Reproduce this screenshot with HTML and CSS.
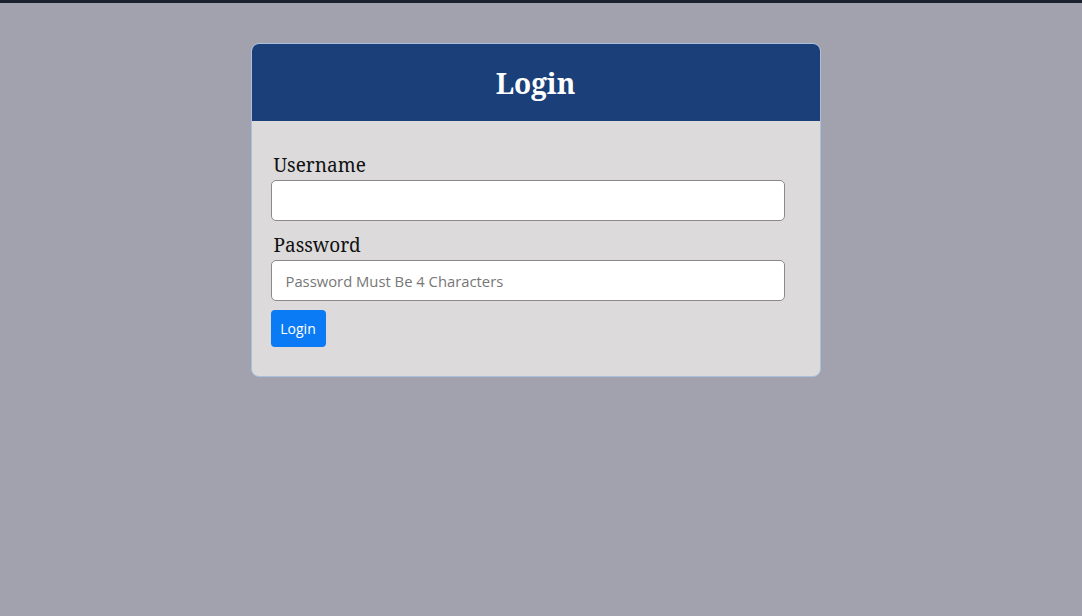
FILE: index.html
```html
<!DOCTYPE html>
<html>
<head>
<meta charset="utf-8">
<link rel="stylesheet" href="styles.css">
</head>
<body>
<div class="topbar"></div>
<main class="page">
  <section class="card">
    <header class="card-head"><h1>Login</h1></header>
    <form class="card-body">
      <label class="lbl" for="u">Username</label>
      <input class="field" id="u" type="text">
      <label class="lbl" for="p">Password</label>
      <input class="field" id="p" type="password" placeholder="Password Must Be 4 Characters">
      <button class="btn" type="button">Login</button>
    </form>
  </section>
</main>
</body>
</html>
```
FILE: styles.css
```css
html, body { margin: 0; padding: 0; }
body {
  background: #a2a2ae;
  height: 616px;
  overflow: hidden;
  font-family: "Noto Serif", "DejaVu Serif", serif;
}
.topbar { height: 3px; background: #1c222d; }
.page { display: flex; justify-content: center; padding-top: 40px; }
.card {
  width: 570px;
  flex: 0 0 570px;
  box-sizing: border-box;
  border: 1px solid #a9bfdd;
  border-radius: 8px;
  background: #dcdadb;
  overflow: hidden;
  margin-left: -11px;
}
.card-head {
  background: #1b3f78;
  height: 77px;
  display: flex;
  align-items: center;
  justify-content: center;
}
.card-head h1 {
  margin: 0;
  color: #fff;
  font-size: 28px;
  font-weight: bold;
}
.card-body {
  display: flex;
  flex-direction: column;
  align-items: flex-start;
  padding: 29px 19px 29px 19px;
}
.lbl {
  font-size: 19px;
  color: #111;
  margin-left: 3px;
  line-height: 30px;
}
.field {
  width: 514px;
  height: 41px;
  box-sizing: border-box;
  border: 1px solid #8a8a8a;
  border-radius: 5px;
  background: #fff;
  padding: 0 14px;
  font-family: "Open Sans", "Noto Sans", sans-serif;
  font-size: 14.8px;
  margin-bottom: 9px;
}
.field::placeholder { color: #777; }
.btn {
  height: 37px;
  width: 55px;
  border: none;
  border-radius: 4px;
  background: #0b7bf5;
  color: #fff;
  font-family: "Open Sans", "Noto Sans", sans-serif;
  font-size: 14px;
  padding: 0;
}
```
